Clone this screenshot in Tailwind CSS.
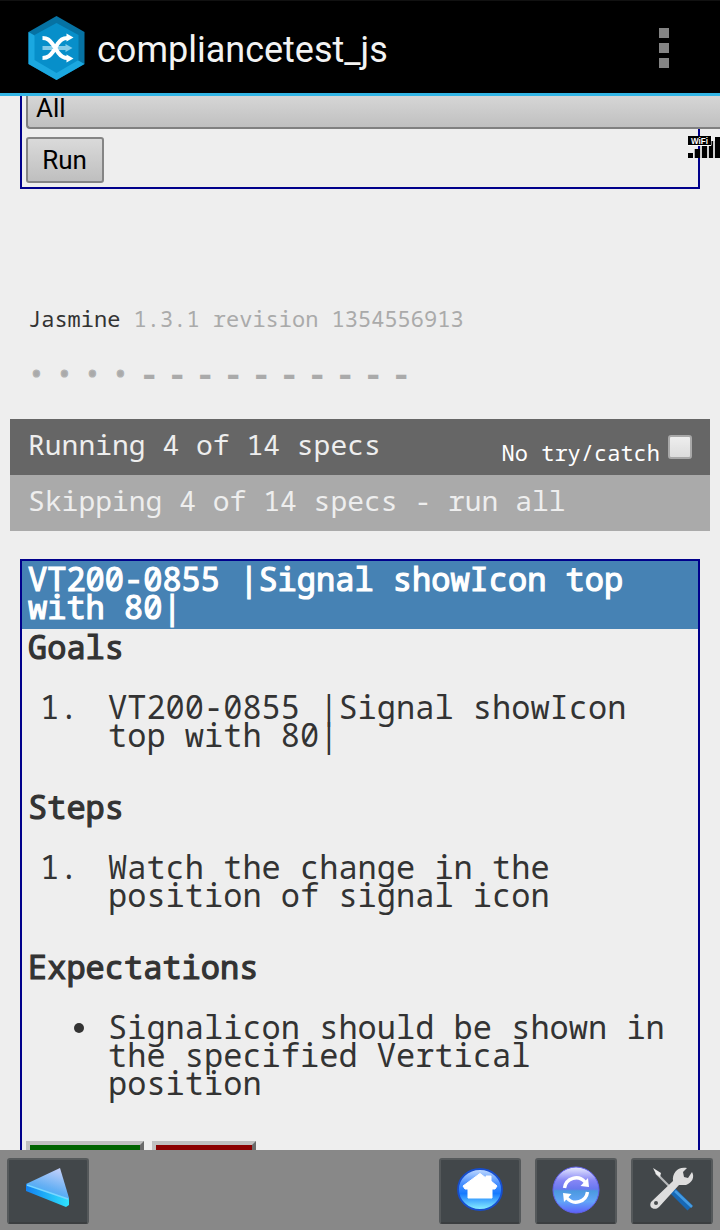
<!DOCTYPE html>
<html lang="en">
<head>
<meta charset="utf-8">
<title>compliancetest_js</title>
<script src="https://cdn.jsdelivr.net/npm/@tailwindcss/browser@4"></script>
</head>
<body class="relative flex h-[1230px] w-[720px] flex-col overflow-hidden bg-[#eeeeee] font-['Droid_Sans_Mono','Noto_Sans_Mono','DejaVu_Sans_Mono',monospace] text-[#333333]">
  <header class="flex h-24 shrink-0 items-center border-b-[3px] border-t border-b-[#33b5e5] border-t-[#111111] bg-black pl-7 pt-[2px]">
    <svg class="h-16 w-[57px] shrink-0" viewBox="-0.5 0 57 64">
      <path d="M28 0 56 16V48L28 64 0 48V16Z" fill="#0672a3"/>
      <path d="M0 16V48L28 64 56 48 28 32Z" fill="#1ba8e0"/>
      <path d="M28 7 50 19V44L28 57 6 44V19Z" fill="#078fca"/>
      <path d="M14 32H38" stroke="#83cbe9" stroke-width="4"/><path d="M37 28 44 32 37 36Z" fill="#83cbe9"/>
      <path d="M14 42C20 42 22 39 25 35L29 28C32 24 34 22 39 22M14 22C19 22 21 24 24 28L30 37C33 41 35 42 39 42" fill="none" stroke="#fff" stroke-width="4"/>
      <path d="M38 17.500 45 21.500 38 25.500ZM38 38.500 45 42.500 38 46.500Z" fill="#fff"/>
    </svg>
    <h1 class="ml-[12px] mt-1 whitespace-nowrap font-['Roboto'] text-[36px] leading-[42px] text-[#f3f3f3]">compliancetest_js</h1>
    <div class="ml-auto mr-[51px] flex flex-col gap-[5px]">
      <i class="size-[10px] bg-[#848484]"></i><i class="size-[10px] bg-[#848484]"></i><i class="size-[10px] bg-[#848484]"></i>
    </div>
  </header>

  <main class="flex h-[1054px] shrink-0 flex-col overflow-hidden">
    <section class="ml-5 h-[93px] w-[680px] shrink-0 border-x-2 border-b-2 border-[#00008b] pl-1 font-['Roboto'] text-[26px] text-black">
      <div class="h-[33px] w-[720px] rounded-bl-sm border-b-2 border-l-2 border-[#808080] bg-linear-to-b from-[#d6d6d6] to-[#c0c0c0] pl-[8px] leading-[24px]">All</div>
      <div class="mt-2 flex h-[46px] w-[78px] items-center justify-center rounded-[3px] border-2 border-[#858585] bg-linear-to-b from-[#dadada] to-[#bfbfbf] pr-px">Run</div>
    </section>

    <p class="ml-7 mt-[115px] h-[28px] shrink-0 whitespace-pre text-[22px] leading-[28px]">Jasmine <span class="text-[#aaaaaa]">1.3.1 revision 1354556913</span></p>
    <div class="ml-7 mt-[27px] flex h-[28px] shrink-0 leading-[28px] text-[#aaaaaa]">
      <span class="w-7 text-[28px] [-webkit-text-stroke:1.2px_#b3b3b3]">•</span><span class="w-7 text-[28px] [-webkit-text-stroke:1.2px_#b3b3b3]">•</span><span class="w-7 text-[28px] [-webkit-text-stroke:1.2px_#b3b3b3]">•</span><span class="w-7 text-[28px] [-webkit-text-stroke:1.2px_#b3b3b3]">•</span><span class="-ml-px w-[29px] text-[34px] font-bold">-</span><span class="-ml-px w-[29px] text-[34px] font-bold">-</span><span class="-ml-px w-[29px] text-[34px] font-bold">-</span><span class="-ml-px w-[29px] text-[34px] font-bold">-</span><span class="-ml-px w-[29px] text-[34px] font-bold">-</span><span class="-ml-px w-[29px] text-[34px] font-bold">-</span><span class="-ml-px w-[29px] text-[34px] font-bold">-</span><span class="-ml-px w-[29px] text-[34px] font-bold">-</span><span class="-ml-px w-[29px] text-[34px] font-bold">-</span><span class="-ml-px w-[29px] text-[34px] font-bold">-</span>
    </div>

    <div class="mx-[10px] mt-[32px] flex h-14 shrink-0 bg-[#666666] pl-[18px] pr-[18px] text-[28px] leading-[51px] text-[#eeeeee]">
      <span class="whitespace-nowrap">Running 4 of 14 specs</span>
      <span class="ml-auto mr-[8px] whitespace-nowrap pt-[8px] text-[22px] text-white">No try/catch</span>
      <i class="mt-4 size-6 rounded-[3px] border-2 border-[#a8a8a8] bg-linear-to-b from-[#eeeeee] to-[#dcdcdc]"></i>
    </div>
    <div class="mx-[10px] h-14 shrink-0 whitespace-nowrap bg-[#aaaaaa] pl-[18px] text-[28px] leading-[51px] text-[#eeeeee]">Skipping 4 of 14 specs - run all</div>

    <section class="ml-5 mt-7 flex h-[640px] w-[680px] shrink-0 flex-col border-2 border-[#00008b] text-[32px] leading-[28px]">
      <h2 class="h-[68px] shrink-0 whitespace-nowrap bg-[#4682b4] pl-[6px] pt-[4px] text-white [-webkit-text-stroke:1.2px_#fff]">VT200-0855 |Signal showIcon top<br>with 80|</h2>
      <h3 class="mt-1 pl-[6px] [-webkit-text-stroke:1.2px_#333]">Goals</h3>
      <div class="mt-8 flex h-14 shrink-0 whitespace-nowrap"><span class="w-[68px] shrink-0 ml-[18px]">1.</span><p>VT200-0855 |Signal showIcon<br>top with 80|</p></div>
      <h3 class="mt-[44px] pl-[6px] [-webkit-text-stroke:1.2px_#333]">Steps</h3>
      <div class="mt-8 flex h-14 shrink-0 whitespace-nowrap"><span class="w-[68px] shrink-0 ml-[18px]">1.</span><p>Watch the change in the<br>position of signal icon</p></div>
      <h3 class="mt-[44px] pl-[6px] [-webkit-text-stroke:1.2px_#333]">Expectations</h3>
      <div class="mt-8 flex h-[84px] shrink-0 whitespace-nowrap"><i class="ml-[52px] mr-6 mt-[10px] size-[10px] shrink-0 rounded-full bg-[#333333]"></i><p>Signalicon should be shown in<br>the specified Vertical<br>position</p></div>
      <div class="ml-1 mt-[44px] flex gap-2">
        <div class="h-12 w-[118px] border-4 border-b-[#6a6a6a] border-l-[#c0c0c0] border-r-[#6a6a6a] border-t-[#c0c0c0] bg-[#006400]"></div>
        <div class="h-12 w-[104px] border-4 border-b-[#6a6a6a] border-l-[#c0c0c0] border-r-[#6a6a6a] border-t-[#c0c0c0] bg-[#8b0000]"></div>
      </div>
    </section>
  </main>

  <nav class="flex h-20 shrink-0 items-start gap-[14px] bg-[#888888] px-[7px] pt-2">
    <div class="mr-auto flex h-[66px] w-[82px] justify-center rounded-[3px] border-2 border-[#55595b] border-b-[#3b3e40] bg-[#42474a]">
      <svg class="h-[62px] w-[78px]" viewBox="0 0 78 62">
        <defs><linearGradient id="back" x1="0.8" y1="0" x2="0.4" y2="1"><stop stop-color="#c8d2fa"/><stop offset=".55" stop-color="#66b0f4"/><stop offset="1" stop-color="#24a5fa"/></linearGradient>
        <linearGradient id="edge"><stop stop-color="#1281f2"/><stop offset="1" stop-color="#2fe4fc"/></linearGradient></defs>
        <path d="M51 8 60 38 60 44 18 29 17 24Z" fill="url(#back)"/>
        <path d="M17 24 60 39 60 45 57 47 17 31Z" fill="url(#edge)"/>
        <path d="M18 25 59 39" stroke="#79d5ff" stroke-width="1.8"/>
      </svg>
    </div>
    <div class="flex h-[66px] w-[82px] justify-center rounded-[3px] border-2 border-[#55595b] border-b-[#3b3e40] bg-[#42474a]">
      <svg class="h-[62px] w-[78px]" viewBox="0 0 78 62">
        <defs><linearGradient id="home" x2="0" y2="1"><stop stop-color="#c4dcff"/><stop offset=".35" stop-color="#4a91ff"/><stop offset=".6" stop-color="#167aff"/><stop offset="1" stop-color="#8df5ff"/></linearGradient></defs>
        <ellipse cx="39" cy="29.500" rx="22" ry="20.500" fill="url(#home)" stroke="#174dcb" stroke-width="1.8"/>
        <path d="M39 13.500 45 18V16H50V21L56 26 54 29H51V38H27V29H24L22 26Z" fill="#fff" stroke="#fff" stroke-linejoin="round"/>
      </svg>
    </div>
    <div class="flex h-[66px] w-[82px] justify-center rounded-[3px] border-2 border-[#55595b] border-b-[#3b3e40] bg-[#42474a]">
      <svg class="h-[62px] w-[78px]" viewBox="0 0 78 62">
        <defs><linearGradient id="sync" x2="0" y2="1"><stop stop-color="#e8ebff"/><stop offset=".3" stop-color="#8585f5"/><stop offset=".48" stop-color="#6878ef"/><stop offset=".52" stop-color="#4b99df"/><stop offset=".75" stop-color="#62a5f8"/><stop offset="1" stop-color="#5c60fa"/></linearGradient></defs>
        <circle cx="39" cy="30" r="23" fill="url(#sync)" stroke="#6262ef" stroke-width="1"/>
        <path d="M27.500 28A11.700 11.700 0 0 1 48 22M50.500 32A11.700 11.700 0 0 1 30 38" fill="none" stroke="#fff" stroke-width="3.4"/>
        <path d="M51 18 52 27 43.500 26ZM27 42 26 33 34.500 34Z" fill="#fff"/>
      </svg>
    </div>
    <div class="flex h-[66px] w-[82px] justify-center rounded-[3px] border-2 border-[#55595b] border-b-[#3b3e40] bg-[#42474a]">
      <svg class="h-[62px] w-[78px]" viewBox="0 0 78 62">
        <path d="M23 13 39 29" stroke="#b7b9bb" stroke-width="2.2"/><path d="M20 8 28 13 27 17 23 14Z" fill="#ececec"/>
        <path d="M40 31 57 48" stroke="#1768b5" stroke-width="7"/><path d="M42 31 59 47" stroke="#439be3" stroke-width="2.5"/>
        <path d="M54 8 50 12 51 17 55 18 59 12C62 17 59 23 53 25L46 25 26 47C22 51 15 48 18 42L40 21C39 13 45 6 54 8Z" fill="#dedede"/>
        <circle cx="23" cy="43" r="2" fill="#4a4e50"/>
      </svg>
    </div>
  </nav>

  <svg class="absolute left-[688px] top-[136px] h-[22px] w-8" viewBox="0 0 32 22">
    <path d="M0 17H5V22H0ZM7 13H12V22H7ZM14 9H19V22H14ZM21 5H25V22H21ZM27 1H32V22H27Z" fill="#000"/>
    <path d="M6.500 13V22M13 9V22M20 9V22M26 5V22" stroke="#aaa"/>
    <path d="M0 9.500H23V0" fill="none" stroke="#fff"/><path d="M0 0H23V9H0Z" fill="#000"/>
    <text x="3" y="7.500" textLength="17" lengthAdjust="spacingAndGlyphs" font-family="Liberation Sans" font-weight="bold" font-size="8.500" fill="#fff">WiFi</text>
  </svg>
</body>
</html>
